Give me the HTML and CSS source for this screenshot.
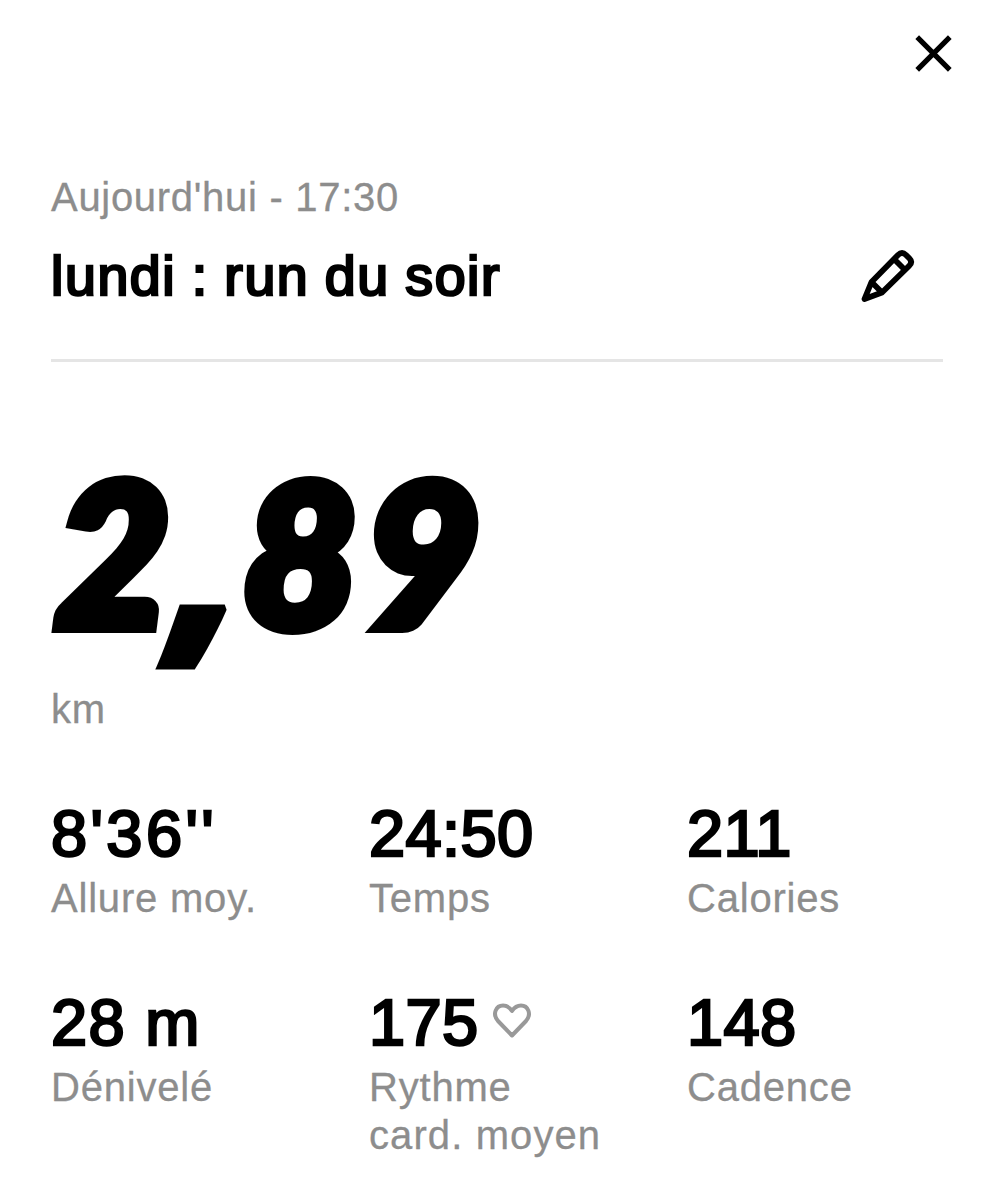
FILE: index.html
```html
<!DOCTYPE html>
<html lang="fr">
<head>
    <meta charset="UTF-8">
    <meta name="viewport" content="width=device-width, initial-scale=1">
    <title>lundi : run du soir</title>
    <link rel="stylesheet" href="styles.css">
</head>
<body>

    <div class="topbar">
        <button class="close-btn" aria-label="Fermer">
            <svg width="38" height="38" viewBox="0 0 38 38">
                <path d="M2.2 3.2 L34.8 35.8 M34.8 3.2 L2.2 35.8" fill="none" stroke="#000" stroke-width="5.2"/>
            </svg>
        </button>
    </div>

    <header class="run-header">
        <p class="date">Aujourd'hui - 17:30</p>
        <div class="title-row">
            <h1>lundi : run du soir</h1>
            <button class="edit-btn" aria-label="Modifier">
                <svg width="56" height="56" viewBox="0 0 56 56">
                    <path d="M5.5 51 L12.5 34 L39 7 Q43 3 47 7 L50.5 10.5 Q54 14 50 18 L23 44.5 Z M12.5 34 L23 44.5 M35 11 L46 22" fill="none" stroke="#000" stroke-width="5.8" stroke-linejoin="round"/>
                </svg>
            </button>
        </div>
    </header>

    <section class="distance">
        <p class="distance-value">2<span class="comma">,</span>89</p>
        <p class="unit">km</p>
    </section>

    <section class="stats">
        <div class="stat">
            <p class="value pace">8'36''</p>
            <p class="label">Allure moy.</p>
        </div>
        <div class="stat">
            <p class="value">24:50</p>
            <p class="label">Temps</p>
        </div>
        <div class="stat">
            <p class="value">211</p>
            <p class="label">Calories</p>
        </div>
        <div class="stat">
            <p class="value elevation">28 m</p>
            <p class="label">Dénivelé</p>
        </div>
        <div class="stat">
            <p class="value">175
                <svg class="heart" width="40" height="38" viewBox="0 0 40 38">
                    <path d="M20 33.5 L6 19 C0 12 4 3.5 11 3.5 C15 3.5 18 6 20 9 C22 6 25 3.5 29 3.5 C36 3.5 40 12 34 19 Z" fill="none" stroke="#999" stroke-width="4" stroke-linejoin="round"/>
                </svg>
            </p>
            <p class="label">Rythme<br><span class="wide">card. moyen</span></p>
        </div>
        <div class="stat">
            <p class="value">148</p>
            <p class="label">Cadence</p>
        </div>
    </section>

</body>
</html>
```
FILE: styles.css
```css
* {
    box-sizing: border-box;
}
body {
    margin: 0;
    padding: 34px 50px 0 51px;
    height: 1200px;
    background-color: #fff;
    font-family: "Liberation Sans", Arial, sans-serif;
    color: #000;
    overflow: hidden;
}
p, h1 {
    margin: 0;
}
button {
    padding: 0;
    border: none;
    background: none;
    cursor: pointer;
}
svg {
    display: block;
}
.topbar {
    display: flex;
    justify-content: flex-end;
    height: 139px;
    margin-right: -10px;
}
.close-btn {
    height: 38px;
}
.date, .unit, .label {
    color: #8d8d8d;
    font-size: 40px;
    line-height: 48px;
    letter-spacing: 0.8px;
    -webkit-text-stroke: 0.3px #8d8d8d;
}
.date {
    letter-spacing: 0.7px;
}
.unit, .label {
    margin-top: -1px;
}
.label .wide {
    letter-spacing: 1.1px;
}
.run-header {
    height: 189px;
    border-bottom: 3px solid #e5e5e5;
}
.title-row {
    display: flex;
    justify-content: space-between;
    align-items: center;
    padding-right: 28px;
    margin-top: 23px;
    height: 64px;
}
h1 {
    font-size: 55.5px;
    font-weight: 500;
    line-height: 62px;
    letter-spacing: 1.6px;
    word-spacing: -1.5px;
    -webkit-text-stroke: 2.6px #000;
}
.distance {
    height: 431px;
    padding-top: 83px;
}
.distance-value {
    height: 241px;
    padding-left: 4px;
    font-family: Lato, sans-serif;
    font-size: 199px;
    font-weight: 900;
    font-style: italic;
    line-height: 210px;
    letter-spacing: 7px;
    white-space: nowrap;
    -webkit-text-stroke: 12px #000;
}
/* straight wedge comma, Lato's is round */
.comma {
    display: inline-block;
    width: 71px;
    margin-left: -6px;
    font-family: "Open Sans", sans-serif;
    font-size: 244px;
    font-weight: 800;
    line-height: 0;
    letter-spacing: 0;
    vertical-align: -8px;
    -webkit-text-stroke: 5px #000;
}
.stats {
    display: grid;
    grid-template-columns: 318px 318px 1fr;
    grid-template-rows: 189px 1fr;
}
.value {
    display: flex;
    align-items: center;
    gap: 13px;
    height: 82px;
    font-size: 65px;
    line-height: 82px;
    letter-spacing: 0.4px;
    -webkit-text-stroke: 2.6px #000;
}
.pace {
    letter-spacing: 3.4px;
    font-kerning: none;
}
.elevation {
    letter-spacing: 1.3px;
}
.heart {
    margin-top: -4px;
}
```
